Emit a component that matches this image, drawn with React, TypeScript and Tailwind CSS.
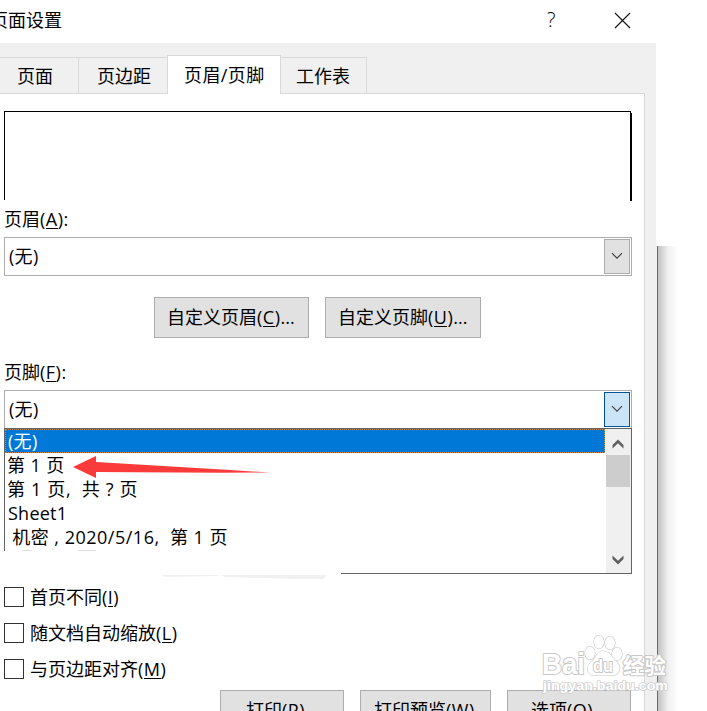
import { ReactNode } from 'react';
import clsx from 'clsx';

const footerOptions = [
  { text: '(无)', tracking: 'tracking-[0.3px]' },
  { text: '第 1 页', tracking: 'tracking-[0.4px] -ml-px' },
  { text: '第 1 页,  共 ? 页', tracking: 'tracking-[0.65px] -ml-px' },
  { text: 'Sheet1', tracking: 'tracking-[0.25px]' },
  { text: ' 机密 , 2020/5/16,  第 1 页', tracking: 'tracking-[0.5px] -ml-px' },
];

const checks = [
  { label: '首页不同', hotkey: 'I' },
  { label: '随文档自动缩放', hotkey: 'L' },
  { label: '与页边距对齐', hotkey: 'M' },
];

const Hotkey = ({ children }: { children: string }) => (
  <span className="tracking-[0.5px]">
    (<span className="border-b border-black inline-block leading-[17px]">{children}</span>)
  </span>
);

const Tab = ({ children, className }: { children: ReactNode; className: string }) => (
  <div className={clsx('flex items-center border-t border-[#d9d9d9]', className)}>{children}</div>
);

const SelectBox = ({ open }: { open?: boolean }) => (
  <div className={clsx('ml-1 w-[628px] flex items-center justify-between border border-[#adadad] bg-white pl-1 pr-px', open ? 'h-[38px] border-b-0' : 'h-[39px]')}>
    <span className="pb-0.5 tracking-[0.3px]">(无)</span>
    <div
      className={clsx(
        'w-[26px] h-[35px] border flex items-center justify-center pr-px pb-px',
        open ? 'bg-[#cce4f7] border-[#005499]' : 'bg-[#e1e1e1] border-[#adadad]'
      )}
    >
      <svg width="12" height="8" viewBox="0 0 12 8" fill="none" stroke="#444" strokeWidth="1.2">
        <path d="M1 1.2 L6 6.2 L11 1.2" />
      </svg>
    </div>
  </div>
);

const DialogButton = ({ children, className }: { children: ReactNode; className: string }) => (
  <button className={clsx('shrink-0 h-[41px] border border-[#adadad] bg-[#e1e1e1] text-left whitespace-nowrap pb-0.5', className)}>
    {children}
  </button>
);

const ScrollArrow = ({ down }: { down?: boolean }) => (
  <svg width="12" height="10" viewBox="0 0 12 10" className={clsx('mr-px', down && 'rotate-180')}>
    <path d="M6 0.5 L11.5 6 V9.5 L6 4.3 L0.5 9.5 V6 Z" fill="#606060" />
  </svg>
);

const Watermark = () => (
  <svg className="absolute left-[538px] top-[630px]" width="135" height="68" viewBox="0 0 135 68">
    <g
      fill="#fff"
      stroke="#c8c8c8"
      strokeWidth="2"
      strokeLinejoin="round"
      paintOrder="stroke"
      fontFamily="'Liberation Sans', 'Noto Sans CJK SC', sans-serif"
      fontWeight="bold"
    >
      <text x="4" y="44" fontSize="29" textLength="43" lengthAdjust="spacingAndGlyphs">Bai</text>
      <g strokeWidth="1.2">
        <ellipse cx="52" cy="23" rx="5" ry="6.5" />
        <ellipse cx="61" cy="12" rx="5" ry="6.5" />
        <ellipse cx="72" cy="13" rx="5" ry="6.5" />
        <ellipse cx="79" cy="24" rx="5" ry="6.5" />
        <path d="M65 21 C70 21 73 25 76 29 C80 33 83 36 81 41 C79 46 73 46 70 45 H60 C56 46 51 46 50 40 C49 35 53 32 56 29 C59 25 60 21 65 21 Z" />
      </g>
      <text x="55" y="42" fontSize="18" textLength="20" lengthAdjust="spacingAndGlyphs">du</text>
      <text x="85" y="42.5" fontSize="21" textLength="43" lengthAdjust="spacingAndGlyphs">经验</text>
    </g>
    <text
      x="5"
      y="60"
      fontSize="13"
      textLength="125"
      lengthAdjust="spacingAndGlyphs"
      fontFamily="'Liberation Sans', sans-serif"
      fontWeight="bold"
      fill="#fff"
      stroke="#d0d0d0"
      strokeWidth="1.6"
      strokeLinejoin="round"
      paintOrder="stroke"
    >
      jingyan.baidu.com
    </text>
  </svg>
);

const App = () => {
  return (
    <div className="relative w-[707px] h-[711px] overflow-hidden bg-white text-black text-[18px] leading-6 font-['Open_Sans','Noto_Sans_CJK_SC',sans-serif]">
      {/* Title bar */}
      <div className="h-[43px] flex items-center pb-0.5">
        <span className="-ml-[10px] w-[557px] pb-0.5">页面设置</span>
        <span className="w-[67px] pb-0.5 text-[20px] font-light">?</span>
        <svg width="17" height="17" viewBox="0 0 17 17" stroke="#111" strokeWidth="1.1">
          <path d="M1 1 L16 16 M16 1 L1 16" />
        </svg>
      </div>

      <div className="flex h-[668px]">
        <div className="w-[656px] bg-[#f0f0f0]">
          {/* Tabs */}
          <div className="flex items-end h-[50px]">
            <Tab className="w-[79px] h-[36px] pl-[17px] border-r">页面</Tab>
            <Tab className="w-[88px] h-[36px] pl-[18px]">页边距</Tab>
            <Tab className="w-[114px] h-[39px] pl-[16px] bg-white border-x -mb-px relative pb-px tracking-[0.4px]">页眉/页脚</Tab>
            <Tab className="w-[86px] h-[36px] pl-[15px] border-r">工作表</Tab>
          </div>

          <div className="w-[645px] h-[618px] bg-white border-t border-r border-[#d9d9d9] pt-[17px] overflow-hidden">
            <div className="ml-1 w-[628px] h-[90px] flex">
              <div className="w-[626px] h-[89px] border-t border-l border-black" />
              <div className="w-px border-t border-black bg-black" />
              <div className="w-px mt-0.5 bg-black" />
            </div>

            <div className="h-[36px] pl-1 flex items-center">
              <span>页眉<Hotkey>A</Hotkey>:</span>
            </div>
            <SelectBox />

            <div className="mt-[21px] ml-[154px] flex gap-4">
              <DialogButton className="w-[155px] pl-3">自定义页眉<Hotkey>C</Hotkey>...</DialogButton>
              <DialogButton className="w-[156px] pl-3">自定义页脚<Hotkey>U</Hotkey>...</DialogButton>
            </div>

            <div className="mt-4 h-[36px] pl-1 flex items-center">
              <span>页脚<Hotkey>F</Hotkey>:</span>
            </div>
            <SelectBox open />

            {/* Open list */}
            <div className="relative ml-1 w-[628px] h-[146px] flex border border-[#646464]">
              <div className="flex-1">
                {footerOptions.map((option, i) => (
                  <div
                    key={option.text}
                    className={clsx(
                      'h-6 flex items-center whitespace-pre pl-[3px]',
                      i === 0 && 'bg-[#0078d7] text-white outline-1 outline-dotted outline-[#ff8728]/80 -outline-offset-1'
                    )}
                  >
                    <span className={option.tracking}>{option.text}</span>
                  </div>
                ))}
              </div>
              <div className="ml-px w-[25px] bg-[#f0f0f0] flex flex-col items-center pt-[10px] pb-[8px]">
                <ScrollArrow />
                <div className="mt-[6px] mb-auto mr-px w-6 h-8 bg-[#cdcdcd]" />
                <ScrollArrow down />
              </div>
              {/* Erased lower left part of the list */}
              <div className="absolute -left-px top-[122px] w-[337px] h-[24px] bg-white" />
              <svg className="absolute left-0 top-[120px]" width="340" height="32" viewBox="0 0 340 32">
                <path d="M16 2 Q21 -1 28 2 Z M73 1 H91 V2 H73 Z" fill="#dedede" />
                <path d="M156 26 H213 V27 L160 28 Z M215 26 H322 L318 30 H290 L220 28 Z" fill="#f1f1f1" />
              </svg>
            </div>

            <div className="mt-[13px] ml-1 flex flex-col gap-4">
              {checks.map((check) => (
                <label key={check.hotkey} className="h-5 flex items-center gap-1.5">
                  <span className="w-5 h-5 border border-[#333] bg-white" />
                  <span>{check.label}<Hotkey>{check.hotkey}</Hotkey></span>
                </label>
              ))}
            </div>

            <div className="mt-[11px] ml-[220px] flex gap-4">
              <DialogButton className="w-[124px] pl-[25px]">打印<Hotkey>P</Hotkey></DialogButton>
              <DialogButton className="w-[131px] pl-[13px]">打印预览<Hotkey>W</Hotkey></DialogButton>
              <DialogButton className="w-[124px] pl-[23px]">选项<Hotkey>O</Hotkey></DialogButton>
            </div>
          </div>
        </div>

        {/* Window edge and shadow */}
        <div className="mt-[203px] flex">
          <div className="w-px bg-[#f0f0f0]" />
          <div className="w-px bg-[#6b6b6b]" />
          <div className="w-5 bg-linear-to-r from-[#c2c2c2] via-[#f0f0f0] to-white" />
        </div>
      </div>

      {/* Pointer arrow */}
      <svg className="absolute left-[72px] top-[454px]" width="200" height="26" viewBox="0 0 200 26">
        <path d="M1 13 L24 2 V8 L150 15.5 L198 18.5 L150 18.8 L24 18 V24 Z" fill="#fb3a3a" />
      </svg>

      <Watermark />
    </div>
  );
};

export default App;
